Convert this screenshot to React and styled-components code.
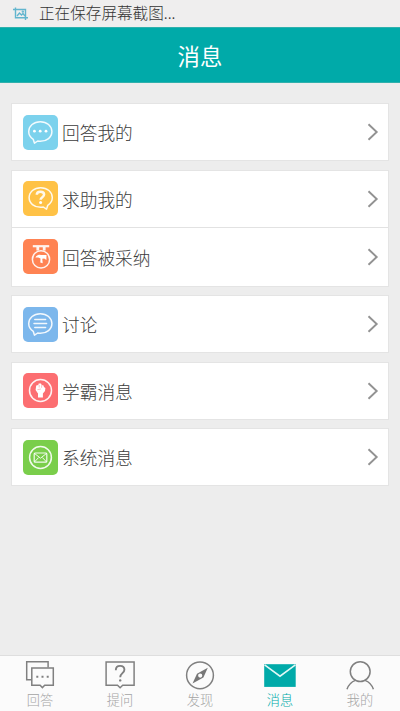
import React from "react";
import styled, { createGlobalStyle } from "styled-components";

const GlobalStyle = createGlobalStyle`
  * {
    box-sizing: border-box;
  }

  body {
    margin: 0;
    background: #ededed;
    font-family: "Noto Sans CJK SC", sans-serif;
    font-weight: 300;
  }
`;

// Layout
const Screen = styled.div`
  height: 711px;
  max-height: 100vh;
  display: flex;
  flex-direction: column;
  overflow: hidden;
  background: #ededed;
`;

const StatusBar = styled.div`
  height: 27px;
  flex: none;
  display: flex;
  align-items: center;
  gap: 11px;
  padding: 0 0 2px 13px;
  color: #333;
  font-size: 15.6px;
  line-height: 25px;
  white-space: nowrap;
  background: #efeeee;

  svg {
    margin-top: 2px;
  }
`;

const Header = styled.header`
  height: 56px;
  flex: none;
  display: flex;
  align-items: center;
  justify-content: center;
  background: #00aaa9;
  border-top: 1px solid #30b0ac;
  border-bottom: 1px solid #30b0ac;
`;

const Title = styled.h1`
  margin: 0;
  color: #fff;
  font-size: 22.4px;
  font-weight: 400;
  line-height: 54px;
`;

const List = styled.main`
  flex: 1;
  display: flex;
  flex-direction: column;
  gap: 8.6px;
  padding: 20px 11px;
`;

const Card = styled.section`
  background: #fff;
  border: 1px solid #e4e4e4;
`;

const Row = styled.div`
  height: ${(props) => (props.$divided ? "59px" : "56px")};
  display: flex;
  align-items: center;
  padding: 0 9px 0 11px;

  & + & {
    border-top: 1px solid #e2e2e2;
  }
`;

const IconTile = styled.div`
  width: 35px;
  height: 35px;
  flex: none;
  border-radius: 5px;
  background: ${(props) => props.$color};

  svg {
    display: block;
    width: 35px;
    height: 35px;
  }
`;

const RowLabel = styled.span`
  flex: 1;
  margin-left: 4px;
  color: #3c3c3c;
  font-size: 17.7px;
  line-height: 26px;
`;

const TabBar = styled.nav`
  height: 56px;
  flex: none;
  display: grid;
  grid-template-columns: repeat(5, 1fr);
  background: #fbfbfb;
  border-top: 1px solid #dedede;
`;

const Tab = styled.div`
  display: flex;
  flex-direction: column;
  align-items: center;
  padding-top: 4px;
  color: ${(props) => (props.$active ? "#00aaa9" : "#a4a4a4")};
  font-size: 13.2px;
  line-height: 18px;

  svg {
    display: block;
    width: 34px;
    height: 31px;
  }
`;

// Icons
const ScreenshotIcon = () => (
  <svg width="15" height="14" viewBox="0 0 15 14" fill="none" stroke="#62b5ce" strokeWidth="1.4">
    <path d="M0 2.5h12.5V13M2.5 .5v10.3H15" />
    <path d="M4 9l2.5-3 2 2 1.5-1.5L12 9" />
    <circle cx="9.8" cy="4.6" r=".5" />
  </svg>
);

const Chevron = () => (
  <svg width="12" height="18" viewBox="0 0 12 18" fill="none" stroke="#929292" strokeWidth="1.9">
    <path d="M1.5 1.3L9.7 9l-8.2 7.7" />
  </svg>
);

const line = {
  viewBox: "0 0 35 35",
  fill: "none",
  stroke: "#fff",
  strokeOpacity: 0.9,
  strokeWidth: 1.5,
  strokeLinecap: "round",
  strokeLinejoin: "round",
};

const BUBBLE =
  "M10.3 24.4C7.3 22.6 5.7 19.9 5.7 16.6c0-5.7 5.1-9.9 11.6-9.9s11.6 4.2 11.6 9.9-5.1 9.7-11.6 9.7c-.9 0-1.8-.1-2.6-.3l-3.2 2.2z";

const AnswerIcon = () => (
  <svg {...line}>
    <path d={BUBBLE} />
    <g fill="#fff" stroke="none">
      <circle cx="11.4" cy="16.2" r="1.4" />
      <circle cx="17.2" cy="16.2" r="1.4" />
      <circle cx="23" cy="16.2" r="1.4" />
    </g>
  </svg>
);

const HelpIcon = () => (
  <svg {...line}>
    <path d={BUBBLE} transform="matrix(-1 0 0 1 35 0)" />
    <path d="M13.8 13.8c0-2 1.5-3 3.6-3s3.7 1.1 3.7 2.8c0 2.6-3.5 2.5-3.5 5.1" strokeWidth="2.5" strokeLinecap="butt" />
    <circle cx="17.6" cy="21.6" r="1.5" fill="#fff" stroke="none" />
  </svg>
);

const MedalIcon = () => (
  <svg {...line}>
    <path d="M9.8 7.2h16.4" strokeWidth="2.2" strokeLinecap="butt" />
    <path d="M14.8 8v3.6M21.2 8v3.6" strokeWidth="2.8" strokeLinecap="butt" />
    <circle cx="18" cy="20.4" r="8.6" />
    <path
      d="M12.4 18.5c1.2-2.4 3.4-3.3 5.3-2.6l5.8.2-.1 4.9-2.2-1.6-1.9.3.4 4.6-2.4-.9.2-4-2.3-.9z"
      fill="#fff"
      stroke="none"
    />
  </svg>
);

const DiscussIcon = () => (
  <svg {...line}>
    <path d={BUBBLE} />
    <path d="M11.8 12.4h10.8M11 16.5h12.6M11.8 20.6h10.8" />
  </svg>
);

const FistIcon = () => (
  <svg {...line}>
    <circle cx="17.5" cy="17.5" r="11" />
    <path
      d="M15 24.4v-4l-2.4-3.5.6-4.3 2.1-.5.4-1.5 2.3-.1.7 1.4 1.9.5.3 1.6 1.5.9-.4 3.2-2.1 2.5v3.8z"
      fill="#fff"
      stroke="none"
    />
    <path d="M16.2 12.3v1.9M18.6 12.6v1.8M14.8 16.6l2.7-.5" stroke="#fc6e71" strokeWidth=".5" />
  </svg>
);

const SystemIcon = () => (
  <svg {...line}>
    <circle cx="17.5" cy="17.5" r="10.9" />
    <rect x="11.2" y="13" width="12.6" height="9.2" rx="1" strokeWidth="1.2" />
    <path d="M11.7 13.6l5.8 4.6 5.8-4.6M11.8 21.6l3.6-3.8M23.2 21.6l-3.6-3.8" strokeWidth="1" />
  </svg>
);

const tabLine = {
  viewBox: "0 0 34 31",
  fill: "none",
  stroke: "#808080",
  strokeWidth: 1.5,
};

const AnswersTabIcon = () => (
  <svg {...tabLine}>
    <path d="M8.3 19.7H3.7V1.8h21.4v5.8" />
    <path d="M8.8 8h21.5v17.3h-8.6l-2.3 2.3-2.3-2.3H8.8z" />
    <path d="M13.3 16.8h2M18.5 16.8h2M23.7 16.8h2" strokeWidth="1.9" />
  </svg>
);

const AskTabIcon = () => (
  <svg {...tabLine}>
    <path d="M3.1 2h28v23.3H19.7l-2.6 2.5-2.6-2.5H3.1z" />
    <path d="M12.8 10.2c0-2.8 1.8-4.3 4.3-4.3s4.3 1.5 4.3 3.9c0 3.3-4.2 3.5-4.2 7.4" strokeWidth="1.9" />
    <circle cx="17.2" cy="20.4" r="1.2" fill="#808080" stroke="none" />
  </svg>
);

const DiscoverTabIcon = () => (
  <svg {...tabLine}>
    <circle cx="17" cy="15.3" r="13.4" />
    <path
      d="M24.8 7.8l-4.4 9.7-10.9 5.9L14 13.7zM17.2 13.5a2.1 2.1 0 1 0 0 4.2 2.1 2.1 0 0 0 0-4.2z"
      fill="#777"
      fillRule="evenodd"
      stroke="none"
    />
  </svg>
);

const MessagesTabIcon = () => (
  <svg {...tabLine}>
    <rect x="1.2" y="4.2" width="31.5" height="22.7" fill="#00aaa9" stroke="none" />
    <path d="M1.6 4.9L17 16.2 32.4 4.9" stroke="#e2f8f6" strokeWidth="1.6" />
  </svg>
);

const ProfileTabIcon = () => (
  <svg {...tabLine}>
    <circle cx="17.2" cy="11.6" r="9.9" />
    <path d="M4 29.3c1.5-4.5 4.4-7.4 8.4-8.9M30.4 29.3c-1.5-4.5-4.4-7.4-8.4-8.9" />
  </svg>
);

const groups = [
  [{ label: "回答我的", color: "#7cd2ed", Icon: AnswerIcon }],
  [
    { label: "求助我的", color: "#ffc246", Icon: HelpIcon },
    { label: "回答被采纳", color: "#ff8353", Icon: MedalIcon },
  ],
  [{ label: "讨论", color: "#7cb7ec", Icon: DiscussIcon }],
  [{ label: "学霸消息", color: "#fc6e71", Icon: FistIcon }],
  [{ label: "系统消息", color: "#7ace4b", Icon: SystemIcon }],
];

const tabs = [
  { label: "回答", Icon: AnswersTabIcon },
  { label: "提问", Icon: AskTabIcon },
  { label: "发现", Icon: DiscoverTabIcon },
  { label: "消息", Icon: MessagesTabIcon, active: true },
  { label: "我的", Icon: ProfileTabIcon },
];

const App = () => {
  return (
    <>
      <GlobalStyle />
      <Screen>
        <StatusBar>
          <ScreenshotIcon />
          <span>正在保存屏幕截图...</span>
        </StatusBar>
        <Header>
          <Title>消息</Title>
        </Header>
        <List>
          {groups.map((rows) => (
            <Card key={rows[0].label}>
              {rows.map(({ label, color, Icon }, index) => (
                <Row key={label} $divided={index > 0}>
                  <IconTile $color={color}>
                    <Icon />
                  </IconTile>
                  <RowLabel>{label}</RowLabel>
                  <Chevron />
                </Row>
              ))}
            </Card>
          ))}
        </List>
        <TabBar>
          {tabs.map(({ label, Icon, active }) => (
            <Tab key={label} $active={active}>
              <Icon />
              <span>{label}</span>
            </Tab>
          ))}
        </TabBar>
      </Screen>
    </>
  );
};

export default App;
